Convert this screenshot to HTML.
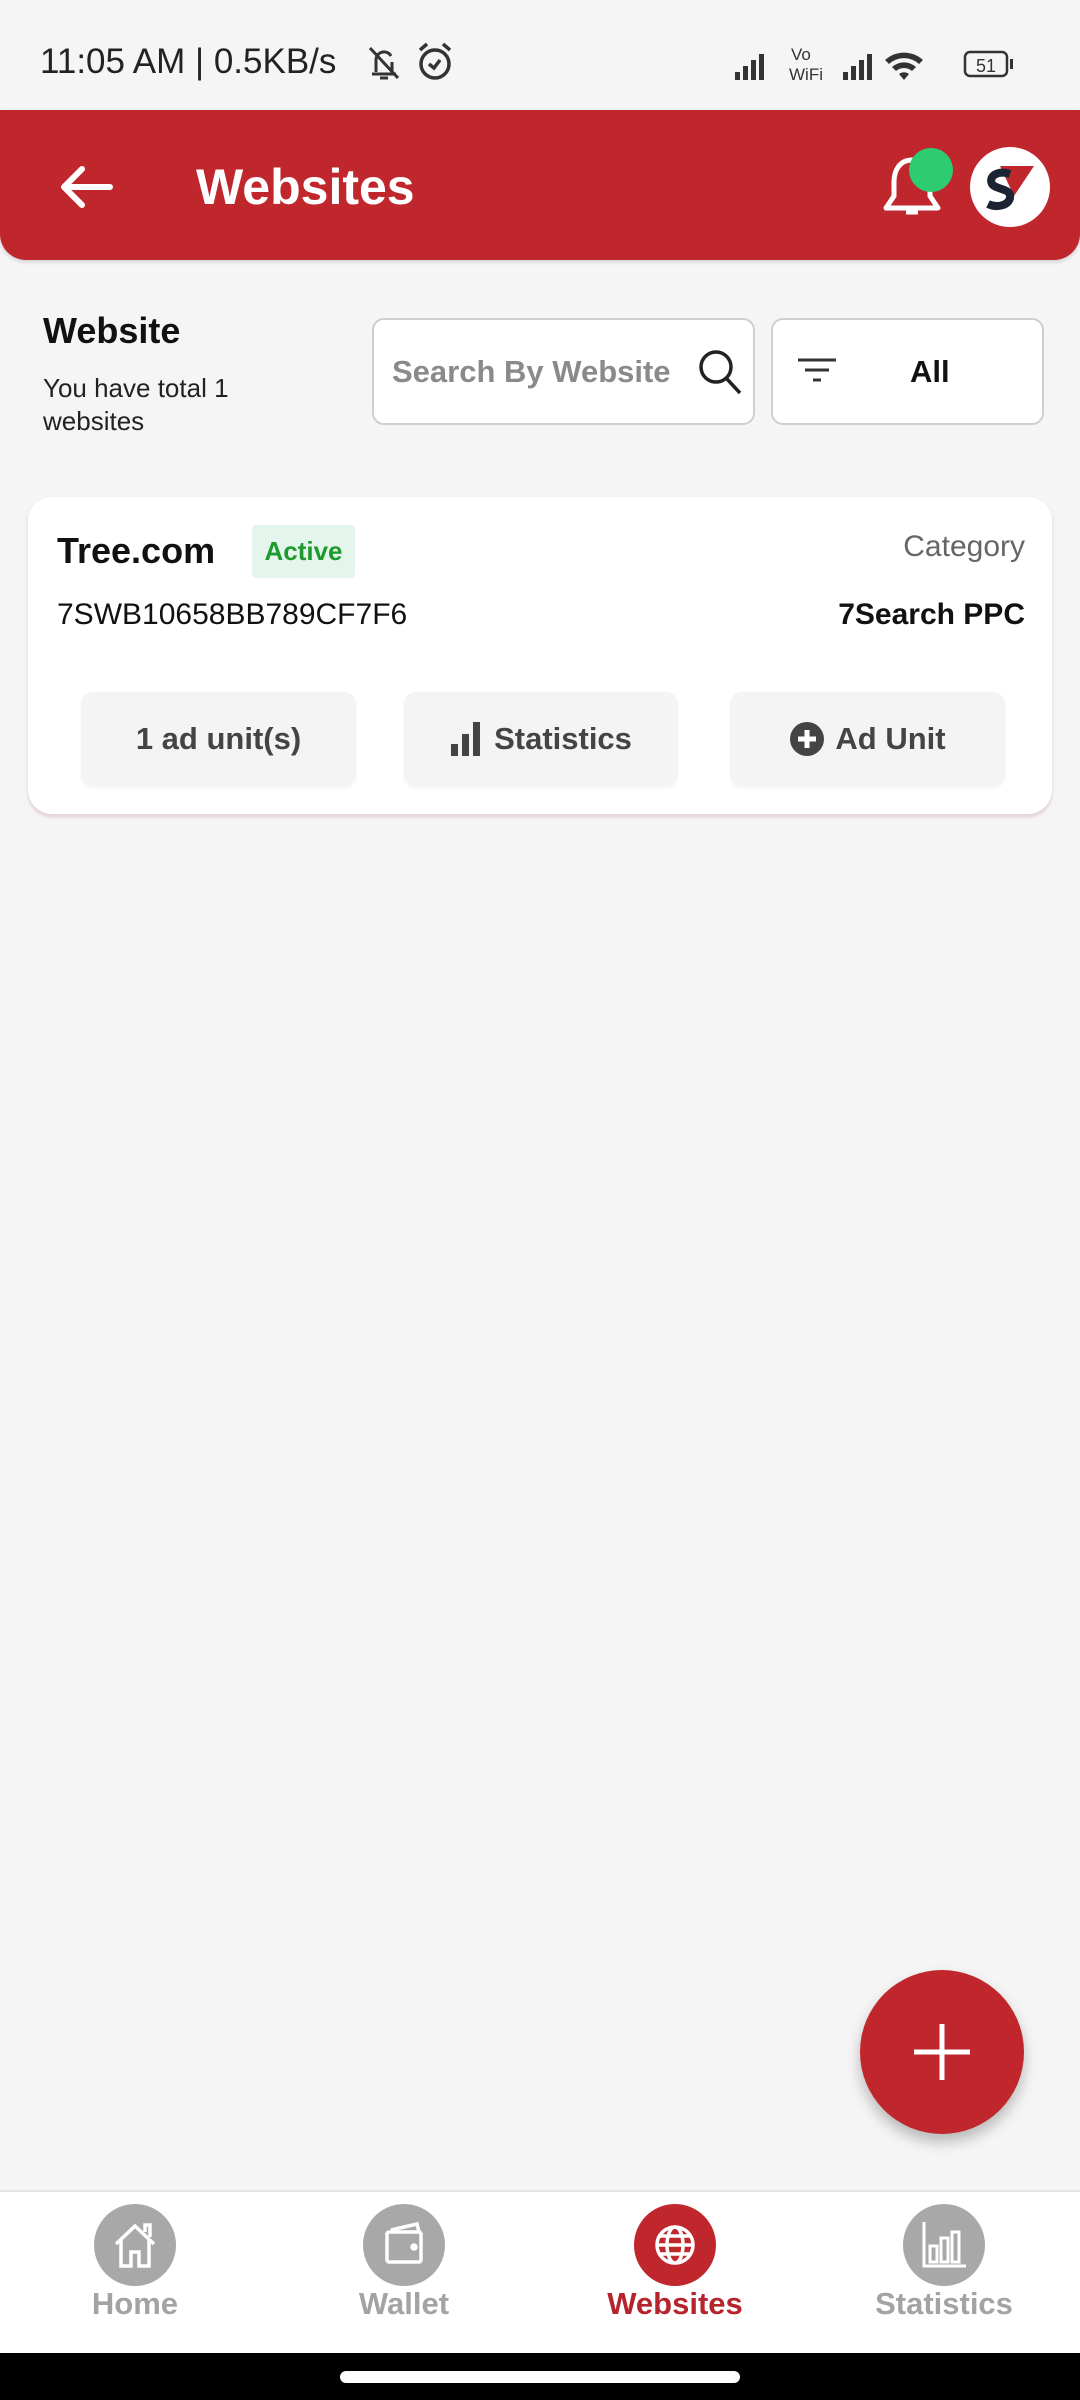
<!DOCTYPE html>
<html><head><meta charset="utf-8"><style>
*{margin:0;padding:0;box-sizing:border-box}
body{width:1080px;height:2400px;background:#f6f5f5;font-family:"Liberation Sans",sans-serif;position:relative;overflow:hidden}
.a{position:absolute}
.btn{position:absolute;top:692px;height:94px;background:#f4f4f4;border-radius:12px;display:flex;align-items:center;justify-content:center;font-weight:bold;font-size:31px;color:#444;box-shadow:0 2px 3px rgba(0,0,0,.05)}
.nv{position:absolute;top:2204px;width:82px;height:82px;border-radius:50%;background:#a8a8a8;display:flex;align-items:center;justify-content:center}
.nl{position:absolute;top:2286px;width:240px;text-align:center;font-weight:bold;font-size:31px;color:#a3a3a3}
</style></head><body>
<div class="a" style="left:40px;top:42px;font-size:35px;color:#222">11:05 AM | 0.5KB/s</div>
<svg class="a" style="left:364px;top:42px" width="40" height="42" viewBox="0 0 40 42" fill="none" stroke="#333" stroke-width="3"><path d="M8 32h24M12 30V18a8 8 0 0 1 15-4M28 20v10M16 36h8M6 6l28 30"/></svg>
<svg class="a" style="left:414px;top:40px" width="42" height="44" viewBox="0 0 42 44" fill="none" stroke="#333" stroke-width="3.5"><circle cx="21" cy="24" r="14"/><path d="M15 24l5 4 6-8M6 10l7-6M36 10l-7-6"/></svg>
<svg class="a" style="left:733px;top:44px" width="300" height="40" viewBox="0 0 300 40" fill="#333"><rect x="2" y="28" width="5" height="8"/><rect x="10" y="22" width="5" height="14"/><rect x="18" y="16" width="5" height="20"/><rect x="26" y="10" width="5" height="26"/><text x="58" y="16" font-size="17" font-family="Liberation Sans">Vo</text><text x="56" y="36" font-size="17" font-family="Liberation Sans">WiFi</text><rect x="110" y="28" width="5" height="8"/><rect x="118" y="22" width="5" height="14"/><rect x="126" y="16" width="5" height="20"/><rect x="134" y="10" width="5" height="26"/><path d="M152 16a28 28 0 0 1 38 0l-4 4a22 22 0 0 0-30 0zM159 23a18 18 0 0 1 24 0l-4 4a12 12 0 0 0-16 0zM166 30a8 8 0 0 1 10 0l-5 6z"/><rect x="232" y="8" width="42" height="24" rx="5" fill="none" stroke="#333" stroke-width="2.5"/><rect x="277" y="15" width="3" height="10"/><text x="243" y="28" font-size="18" font-family="Liberation Sans">51</text></svg>
<div class="a" style="left:0;top:110px;width:1080px;height:150px;background:#c0272d;border-radius:0 0 26px 26px;box-shadow:0 2px 4px rgba(0,0,0,.15)"></div>
<svg class="a" style="left:58px;top:164px" width="56" height="46" viewBox="0 0 56 46" fill="none" stroke="#fff" stroke-width="6" stroke-linecap="round" stroke-linejoin="round"><path d="M52 23H6M24 5L6 23l18 18"/></svg>
<div class="a" style="left:196px;top:158px;font-size:50px;font-weight:bold;color:#fff">Websites</div>
<svg class="a" style="left:880px;top:150px" width="66" height="72" viewBox="0 0 66 72" fill="none" stroke="#fff" stroke-width="5" stroke-linejoin="round"><path d="M32 10c-12 0-18 10-18 22v14l-8 12h52l-8-12V32c0-12-6-22-18-22zM26 62h12"/></svg>
<div class="a" style="left:909px;top:148px;width:44px;height:44px;border-radius:50%;background:#2ecc71"></div>
<div class="a" style="left:970px;top:147px;width:80px;height:80px;border-radius:50%;background:#fff"></div>
<svg class="a" style="left:978px;top:160px" width="64" height="56" viewBox="0 0 64 56"><path d="M22 6h34L36 36z" fill="#c0272d"/><path d="M32 14c-12-4-22 2-18 10 4 6 20 4 18 14-2 8-14 10-22 6" fill="none" stroke="#1c2433" stroke-width="8"/></svg>
<div class="a" style="left:43px;top:310px;font-size:36px;font-weight:bold;color:#111">Website</div>
<div class="a" style="left:43px;top:372px;font-size:26px;color:#222;line-height:33px">You have total 1<br>websites</div>
<div class="a" style="left:372px;top:318px;width:383px;height:107px;background:#fff;border:2px solid #cfcfcf;border-radius:12px"></div>
<div class="a" style="left:392px;top:354px;font-size:31px;font-weight:bold;color:#8a8a8a">Search By Website</div>
<svg class="a" style="left:697px;top:348px" width="48" height="50" viewBox="0 0 48 50" fill="none" stroke="#222" stroke-width="3.5"><circle cx="19" cy="19" r="15"/><path d="M30 31l13 14"/></svg>
<div class="a" style="left:771px;top:318px;width:273px;height:107px;background:#fff;border:2px solid #cfcfcf;border-radius:12px"></div>
<svg class="a" style="left:796px;top:356px" width="44" height="30" viewBox="0 0 44 30" stroke="#333" stroke-width="3"><path d="M2 4h38M9 14h24M17 24h8"/></svg>
<div class="a" style="left:910px;top:354px;font-size:31px;font-weight:bold;color:#111">All</div>
<div class="a" style="left:28px;top:497px;width:1024px;height:317px;background:#fff;border-radius:24px;box-shadow:0 2px 5px rgba(0,0,0,.08),0 4px 2px rgba(230,170,180,.25)"></div>
<div class="a" style="left:57px;top:530px;font-size:36px;font-weight:bold;color:#111">Tree.com</div>
<div class="a" style="left:252px;top:525px;width:103px;height:53px;background:#e4f5ec;border-radius:4px;font-size:26px;font-weight:bold;color:#1e9a2e;text-align:center;line-height:53px">Active</div>
<div class="a" style="right:55px;top:530px;font-size:30px;color:#666">Category</div>
<div class="a" style="left:57px;top:598px;font-size:30px;color:#111">7SWB10658BB789CF7F6</div>
<div class="a" style="right:55px;top:598px;font-size:30px;font-weight:bold;color:#111">7Search PPC</div>
<div class="btn" style="left:81px;width:275px">1 ad unit(s)</div>
<div class="btn" style="left:404px;width:274px"><svg width="34" height="34" viewBox="0 0 34 34" fill="#444" style="margin-right:10px"><rect x="1" y="22" width="7" height="12"/><rect x="12" y="12" width="7" height="22"/><rect x="23" y="0" width="7" height="34"/></svg>Statistics</div>
<div class="btn" style="left:730px;width:275px"><svg width="36" height="36" viewBox="0 0 36 36" style="margin-right:10px"><circle cx="18" cy="18" r="17" fill="#444"/><path d="M18 9v18M9 18h18" stroke="#fff" stroke-width="5"/></svg>Ad Unit</div>
<div class="a" style="left:860px;top:1970px;width:164px;height:164px;border-radius:50%;background:#c0272d;box-shadow:0 8px 14px rgba(0,0,0,.25)"></div>
<svg class="a" style="left:912px;top:2022px" width="60" height="60" viewBox="0 0 60 60" stroke="#fff" stroke-width="5"><path d="M30 2v56M2 30h56"/></svg>
<div class="a" style="left:0;top:2190px;width:1080px;height:163px;background:#fff;border-top:2px solid #e4e4e4"></div>
<div class="nv" style="left:94px"><svg width="50" height="50" viewBox="0 0 50 50" fill="none" stroke="#fff" stroke-width="3.5"><path d="M6 24L25 6l19 18M11 20v26h10V32h8v14h10V20M35 12V5h5v12"/></svg></div>
<div class="nv" style="left:363px"><svg width="50" height="50" viewBox="0 0 50 50" fill="none" stroke="#fff" stroke-width="3.5"><rect x="8" y="12" width="34" height="30" rx="2"/><path d="M12 10l26-6 2 8"/><circle cx="35" cy="27" r="2" fill="#fff"/></svg></div>
<div class="nv" style="left:634px;background:#c0272d"><svg width="50" height="50" viewBox="0 0 50 50" fill="none" stroke="#fff" stroke-width="3.5"><circle cx="25" cy="25" r="18"/><ellipse cx="25" cy="25" rx="8" ry="18"/><path d="M7 25h36M10 16h30M10 34h30"/></svg></div>
<div class="nv" style="left:903px"><svg width="50" height="50" viewBox="0 0 50 50" fill="none" stroke="#fff" stroke-width="3"><path d="M5 2v44h42"/><rect x="11" y="26" width="7" height="16"/><rect x="22" y="18" width="7" height="24"/><rect x="33" y="12" width="7" height="30"/></svg></div>
<div class="nl" style="left:15px">Home</div>
<div class="nl" style="left:284px">Wallet</div>
<div class="nl" style="left:555px;color:#b5232c">Websites</div>
<div class="nl" style="left:824px">Statistics</div>
<div class="a" style="left:0;top:2353px;width:1080px;height:47px;background:#000"></div>
<div class="a" style="left:340px;top:2371px;width:400px;height:12px;border-radius:6px;background:#fff"></div>
</body></html>
